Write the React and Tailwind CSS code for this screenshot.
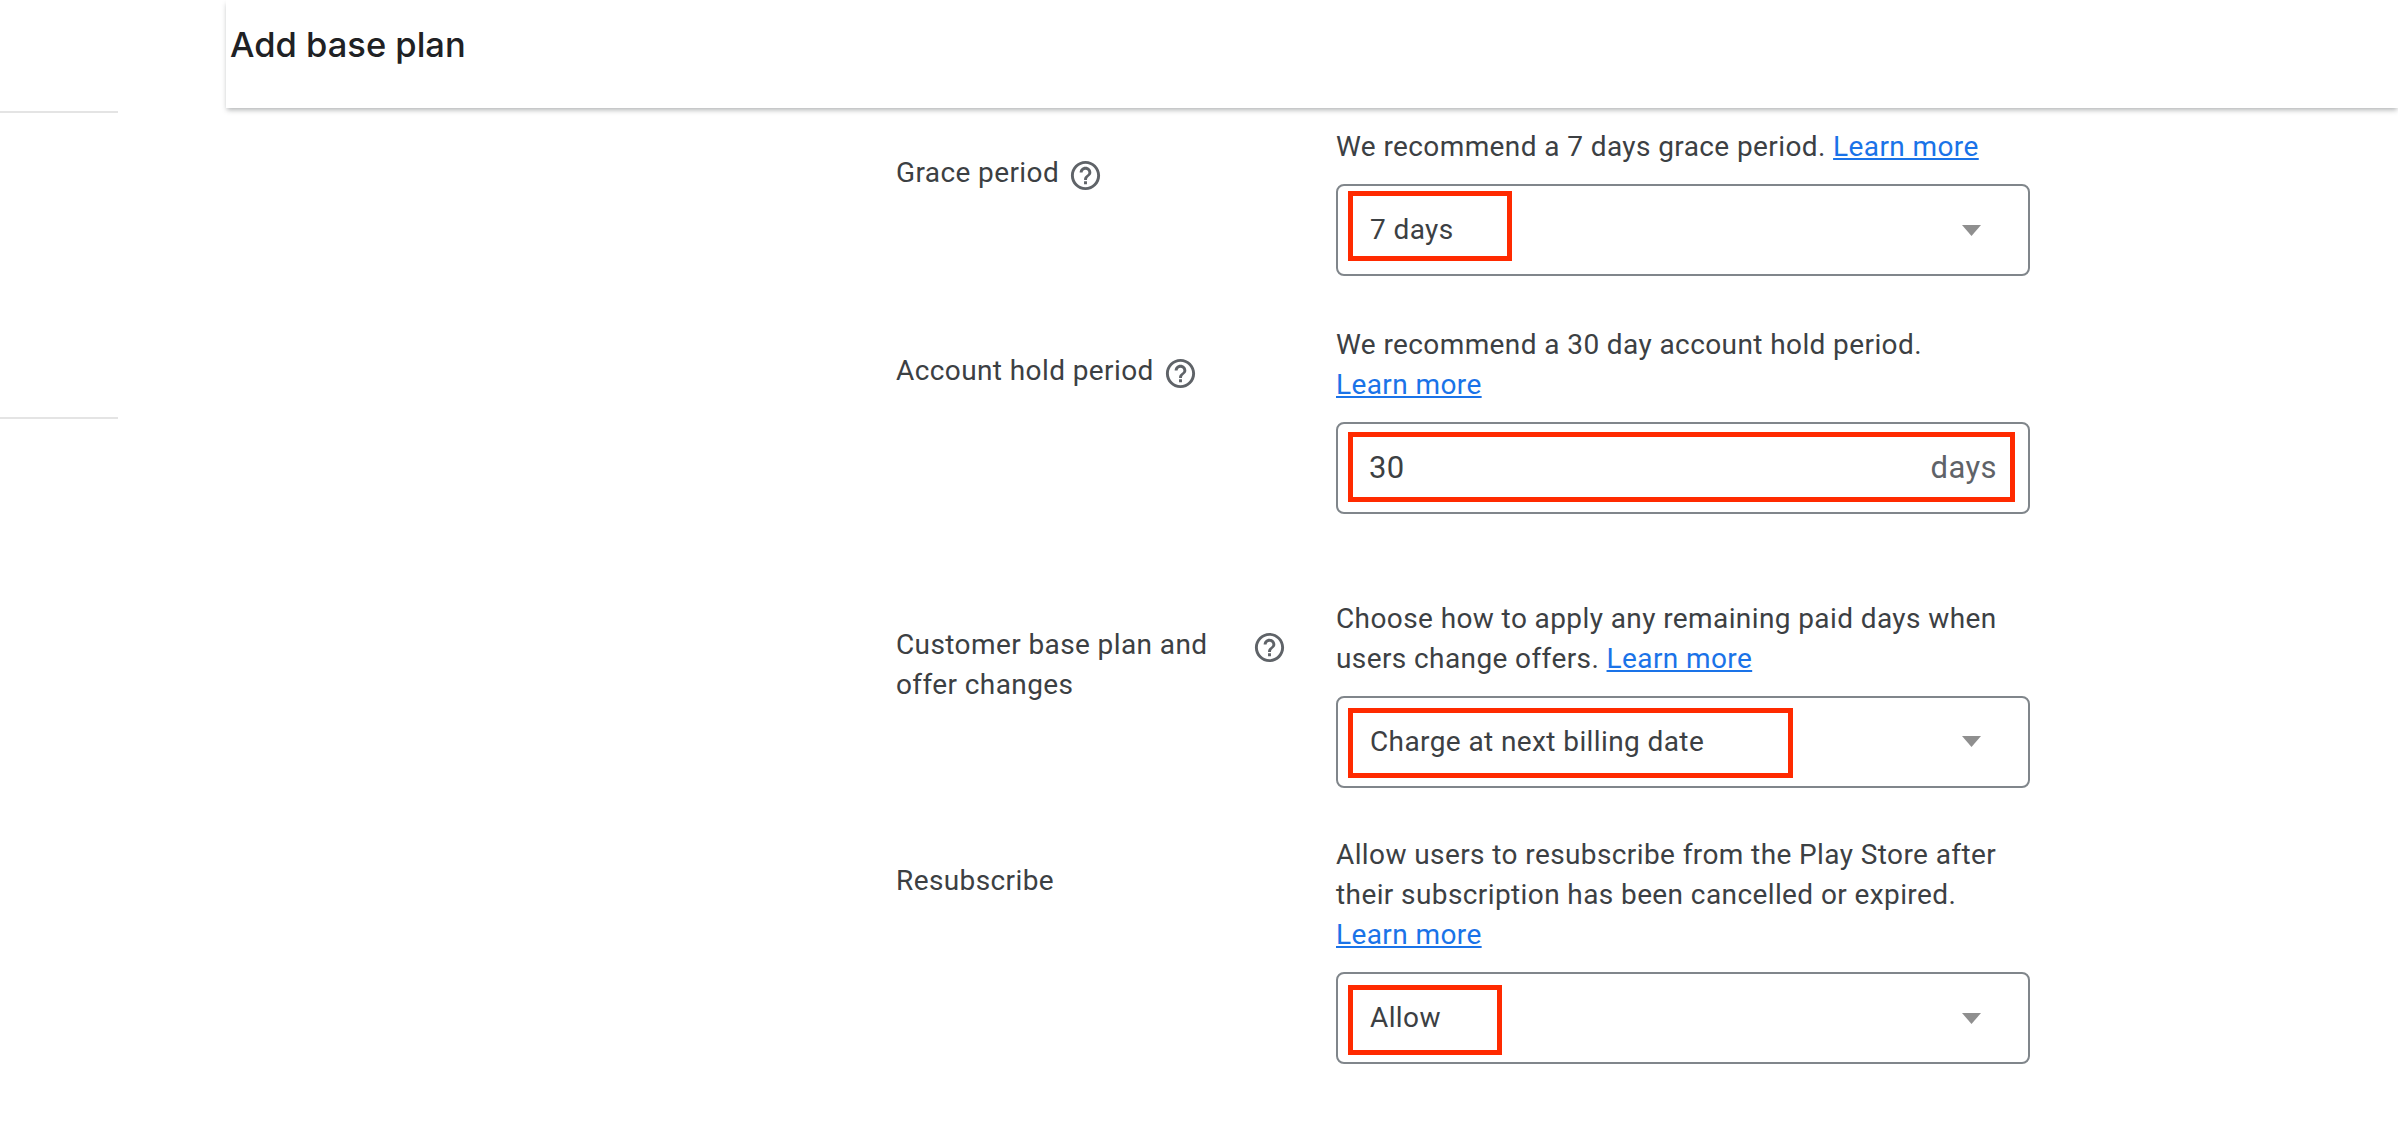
import React from 'react'

function HelpIcon() {
  return (
    <svg viewBox="0 0 24 24" className="w-[35px] h-[35px] shrink-0 fill-[#5f6368]">
      <path d="M11 18h2v-2h-2v2zm1-16C6.48 2 2 6.48 2 12s4.48 10 10 10 10-4.48 10-10S17.52 2 12 2zm0 18c-4.41 0-8-3.59-8-8s3.59-8 8-8 8 3.59 8 8-3.59 8-8 8zm0-14c-2.21 0-4 1.79-4 4h2c0-1.1.9-2 2-2s2 .9 2 2c0 2-3 1.75-3 5h2c0-2.25 3-2.5 3-5 0-2.21-1.79-4-4-4z" />
    </svg>
  )
}

function LearnMore() {
  return (
    <a href="#" className="text-[#1a73e8] underline whitespace-nowrap">
      Learn more
    </a>
  )
}

function Row({ label, help, helper, children, className }) {
  return (
    <div className={`grid grid-cols-[440px_694px] ${className}`}>
      <div className="pt-[26px] flex items-start gap-[9px]">
        <div className="max-w-[347px]">{label}</div>
        {help && (
          <div className="mt-[5px]">
            <HelpIcon />
          </div>
        )}
      </div>
      <div>
        <p>{helper}</p>
        {children}
      </div>
    </div>
  )
}

// redClass places the annotation drawn over the field
function Select({ value, redClass }) {
  return (
    <div className="relative mt-[17px] h-[92px] border-2 border-[#80868b] rounded-[8px] flex items-center justify-between pl-[32px] pr-[47px]">
      <span className="text-[#3c4043]">{value}</span>
      <svg viewBox="0 0 19 11" className="w-[19px] h-[11px] fill-[#8f8f8f]">
        <path d="M0 0h19L9.5 11z" />
      </svg>
      <div className={`absolute left-[10px] h-[70px] border-[5px] border-[#ff2a00] ${redClass}`} />
    </div>
  )
}

function DaysInput() {
  return (
    <div className="relative mt-[17px] h-[92px] border-2 border-[#80868b] rounded-[8px] flex items-center justify-between pl-[31px] pr-[31px]">
      <span className="text-[31px] text-[#3c4043]">30</span>
      <span className="text-[#5f6368] text-[31px]">days</span>
      <div className="absolute left-[10px] right-[13px] top-[8px] h-[70px] border-[5px] border-[#ff2a00]" />
    </div>
  )
}

export default function App() {
  return (
    <div className="h-screen overflow-hidden bg-white flex font-['Roboto',sans-serif] text-[28px] tracking-[0.4px] leading-[40px] text-[#3c4043]">
      <div className="w-[118px] shrink-0 pt-[111px]">
        <div className="h-[2px] bg-[#e4e4e4]" />
        <div className="h-[2px] bg-[#e4e4e4] mt-[304px]" />
      </div>

      <div className="ml-[108px] flex-1 min-w-0">
        <div className="h-[108px] pl-[4px] pt-[24px] bg-white shadow-[0_3px_5px_-1px_rgba(60,64,67,0.4)]">
          <h1 className="font-['Inter',sans-serif] font-medium tracking-normal text-[34.5px] leading-[42px] text-[#202124]">Add base plan</h1>
        </div>

        <div className="pl-[670px] pt-[19px]">
          <Row
            label="Grace period"
            help
            helper={<>We recommend a 7 days grace period. <LearnMore /></>}
          >
            <Select value="7 days" redClass="top-[5px] w-[164px]" />
          </Row>

          <Row
            className="mt-[48.5px]"
            label="Account hold period"
            help
            helper={<>We recommend a 30 day account hold period. <LearnMore /></>}
          >
            <DaysInput />
          </Row>

          <Row
            className="mt-[85px]"
            label="Customer base plan and offer changes"
            help
            helper={<>Choose how to apply any remaining paid days when users change offers. <LearnMore /></>}
          >
            <Select value="Charge at next billing date" redClass="top-[10px] w-[445px]" />
          </Row>

          <Row
            className="mt-[47.5px]"
            label="Resubscribe"
            helper={<>Allow users to resubscribe from the Play Store after their subscription has been cancelled or expired. <LearnMore /></>}
          >
            <Select value="Allow" redClass="top-[11px] w-[154px]" />
          </Row>
        </div>
      </div>
    </div>
  )
}
